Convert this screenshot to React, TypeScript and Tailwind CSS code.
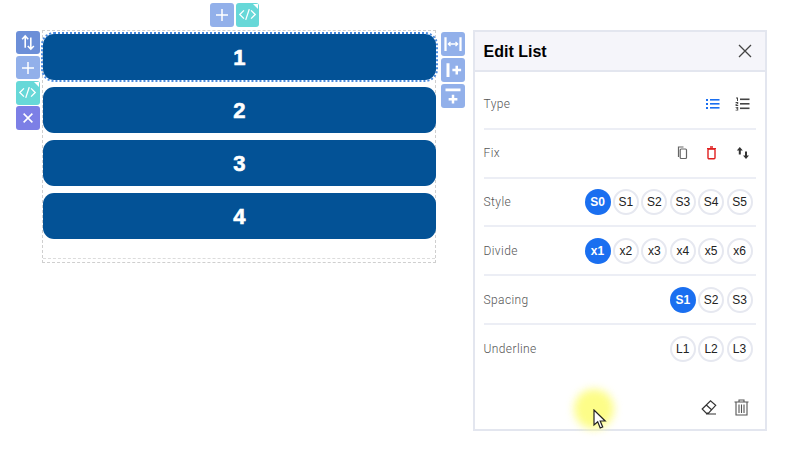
import React from "react";

const Tile = ({ color, children, corner }: { color: string; children: React.ReactNode; corner?: boolean }) => (
  <div className={`relative flex size-[23.5px] items-center justify-center overflow-hidden rounded-[3px] ${color}`}>
    {children}
    {corner && <div className="absolute right-[1px] top-[1px] size-0 border-l-[5px] border-t-[5px] border-l-transparent border-t-white" />}
  </div>
);

const Ic = ({ children, s = 16 }: { children: React.ReactNode; s?: number }) => (
  <svg width={s} height={s} viewBox="0 0 16 16" fill="none" stroke="currentColor" strokeWidth="1.5" className="text-white">
    {children}
  </svg>
);

const Plus = () => (
  <Ic>
    <path d="M8 2v12M2 8h12" />
  </Ic>
);
const Code = () => (
  <Ic s={19}>
    <path d="M5 4.500 1.500 8 5 11.500M11 4.500 14.500 8 11 11.500M9.500 3.500 6.500 12.500" strokeWidth="1.100" />
  </Ic>
);

const Item = ({ n, active }: { n: number; active?: boolean }) => (
  <div
    className={`flex h-[46px] items-center justify-center rounded-[11px] bg-[#035296] text-[22px] font-bold text-white [font-family:'Liberation_Sans',sans-serif] [-webkit-text-stroke:0.6px_white] ${
      active ? "outline-2 outline-dotted outline-[#4a8ade] outline-offset-0" : ""
    }`}
  >
    {n}
  </div>
);

const Pill = ({ label, on }: { label: string; on?: boolean }) => (
  <div
    className={`flex size-[26px] items-center justify-center rounded-full text-[12px] [font-family:'Liberation_Sans',sans-serif] ${
      on ? "bg-[#1a6ff0] font-bold text-white" : "border-2 border-[#e6e8f0] bg-white text-[#222]"
    }`}
  >
    {label}
  </div>
);

const Row = ({ label, children, last }: { label: string; children: React.ReactNode; last?: boolean }) => (
  <div className={`flex h-[48.8px] items-center justify-between pr-[3px] ${last ? "" : "border-b-2 border-[#eceef5]"}`}>
    <span className="text-[12px] font-light tracking-[0.4px] text-[#555]">{label}</span>
    <div className="flex items-center gap-[2.4px]">{children}</div>
  </div>
);

export default function App() {
  return (
    <div className="relative flex h-[459px] w-[800px] items-start overflow-hidden bg-white [font-family:Roboto,sans-serif]">
      {/* left tools */}
      <div className="ml-[16px] mt-[30.5px] flex flex-col gap-[1.8px]">
        <Tile color="bg-[#6c8fd8]">
          <Ic s={18}>
            <path d="M5.500 13V3M2.800 5.500 5.500 2.600l2.700 2.900M10.500 4v10M7.800 11.500l2.700 2.900 2.700-2.900" strokeWidth="1.400" />
          </Ic>
        </Tile>
        <Tile color="bg-[#92b0ea]">
          <Plus />
        </Tile>
        <Tile color="bg-[#67d8d8]" corner>
          <Code />
        </Tile>
        <Tile color="bg-[#7c7fe6]">
          <Ic s={14}>
            <path d="M3 3l10 10M13 3 3 13" strokeWidth="1.800" />
          </Ic>
        </Tile>
      </div>

      {/* canvas */}
      <div className="relative ml-[2.5px] mt-[30px] h-[233px] w-[394px] border border-dashed border-[#cfcfcf] pt-[3px]">
        <div className="-mr-[0.5px] flex flex-col gap-[7px]">
          <Item n={1} active />
          <Item n={2} />
          <Item n={3} />
          <Item n={4} />
        </div>
        <div className="absolute left-[167px] top-[-28px] flex gap-[2px]">
          <Tile color="bg-[#92b0ea]">
            <Plus />
          </Tile>
          <Tile color="bg-[#67d8d8]" corner>
            <Code />
          </Tile>
        </div>
        <div className="absolute bottom-[3px] left-0 right-0 border-b border-dashed border-[#dcdcdc]" />
      </div>

      {/* right tools */}
      <div className="ml-[5px] mt-[32px] flex flex-col gap-[2.5px]">
        <Tile color="bg-[#92b0ea]">
          <Ic s={20}>
            <path d="M2 2.500v11M14 2.500v11" strokeWidth="1.800" />
            <path d="M4.500 8h7M6 6.300 4.300 8 6 9.700M10 6.300 11.700 8 10 9.700" strokeWidth="1.100" />
          </Ic>
        </Tile>
        <Tile color="bg-[#92b0ea]">
          <Ic s={20}>
            <path d="M4 2.500v11" strokeWidth="2.400" />
            <path d="M7.500 8h7M11 4.500v7" strokeWidth="2" />
          </Ic>
        </Tile>
        <Tile color="bg-[#92b0ea]">
          <Ic s={20}>
            <path d="M2 3h12" strokeWidth="2.200" />
            <path d="M4.500 10.500h7M8 7v7" strokeWidth="2" />
          </Ic>
        </Tile>
      </div>

      {/* panel */}
      <div className="ml-[8px] mt-[30px] flex h-[401px] w-[294px] flex-col border-2 border-[#e3e6ef] bg-white">
        <div className="flex h-[40px] items-center justify-between border-b-2 border-[#e3e6ef] bg-[#f5f5fa] pl-[9px] pr-[13px]">
          <span className="pt-[1px] text-[16px] font-bold text-black [font-family:'Liberation_Sans',sans-serif]">Edit List</span>
          <svg width="14" height="14" viewBox="0 0 14 14" stroke="#444" strokeWidth="1.300">
            <path d="M1 1l12 12M13 1 1 13" />
          </svg>
        </div>
        <div className="mt-[9px] flex flex-1 flex-col pl-[9px] pr-[9px]">
          <Row label="Type">
            <div className="flex items-center gap-[14.500px] pr-[3px]">
              <svg width="14" height="12" viewBox="0 0 14 12" fill="#1a6ff0">
                <rect x="0" y="1" width="2" height="2" />
                <rect x="0" y="5" width="2" height="2" />
                <rect x="0" y="9" width="2" height="2" />
                <rect x="4" y="1" width="9.500" height="1.600" />
                <rect x="4" y="5" width="9.500" height="1.600" />
                <rect x="4" y="9" width="9.500" height="1.600" />
              </svg>
              <svg width="15" height="14" viewBox="0 0 15 14" fill="#444">
                <rect x="5" y="1.500" width="9.500" height="1.600" />
                <rect x="5" y="6" width="9.500" height="1.600" />
                <rect x="5" y="10.500" width="9.500" height="1.600" />
                <path d="M1 .5h2v3.400H2V1.400H1zM.6 5h2.600v2.300H1.600v.8h1.600V9H.6V6.700h1.600v-.8H.6zM.6 10h2.600v3.600H.6v-.8h1.700v-.7H1v-.6h1.300v-.7H.6z" />
              </svg>
            </div>
          </Row>
          <Row label="Fix">
            <div className="flex items-center gap-[18.500px] pr-[3px]">
              <svg width="12" height="14" viewBox="0 0 12 14" fill="none" stroke="#666" strokeWidth="1.200">
                <path d="M2.500 11V1h5" />
                <rect x="4.200" y="3" width="6.300" height="9.500" rx="1" />
              </svg>
              <svg width="11" height="14" viewBox="0 0 11 14" fill="none" stroke="#e02020" strokeWidth="1.400">
                <path d="M1 2.600h9M4 1h3" />
                <rect x="2" y="3" width="7" height="9.800" rx="1" />
              </svg>
              <svg width="14" height="14" viewBox="0 0 14 14" fill="#333">
                <path d="M3.800 1 .8 4.500h2v4h2v-4h2zM10 13l3-3.500h-2v-4H9v4H7z" />
              </svg>
            </div>
          </Row>
          <Row label="Style">
            <Pill label="S0" on />
            <Pill label="S1" />
            <Pill label="S2" />
            <Pill label="S3" />
            <Pill label="S4" />
            <Pill label="S5" />
          </Row>
          <Row label="Divide">
            <Pill label="x1" on />
            <Pill label="x2" />
            <Pill label="x3" />
            <Pill label="x4" />
            <Pill label="x5" />
            <Pill label="x6" />
          </Row>
          <Row label="Spacing">
            <Pill label="S1" on />
            <Pill label="S2" />
            <Pill label="S3" />
          </Row>
          <Row label="Underline" last>
            <Pill label="L1" />
            <Pill label="L2" />
            <Pill label="L3" />
          </Row>
          <div className="mt-[25px] flex items-center justify-end gap-[17px] pr-[7px]">
            <svg width="16" height="16" viewBox="0 0 16 16" fill="none" stroke="#333" strokeWidth="1.200">
              <path d="M1.200 10 9.500 1.800l5.200 4.600-7 7.600H5zM5 5.800l5.300 4.700M5 15h10" />
            </svg>
            <svg width="15" height="17" viewBox="0 0 15 17" fill="none" stroke="#555" strokeWidth="1.100">
              <path d="M.5 3h14M5 3V1h5v2M2 3v13h11V3M5 5.500V14M7.500 5.500V14M10 5.500V14" />
            </svg>
          </div>
        </div>
      </div>

      {/* cursor highlight */}
      <div className="absolute left-[574px] top-[389px] size-[40px] rounded-full bg-[#fdfd88] blur-[4px]" />
      <svg className="absolute left-[593px] top-[409px]" width="15" height="21" viewBox="0 0 15 21" fill="white" stroke="#222" strokeWidth="1.200">
        <path d="M1 1v15l3.700-3.300 2.500 6.300 2.500-1-2.500-6h5z" />
      </svg>
    </div>
  );
}
